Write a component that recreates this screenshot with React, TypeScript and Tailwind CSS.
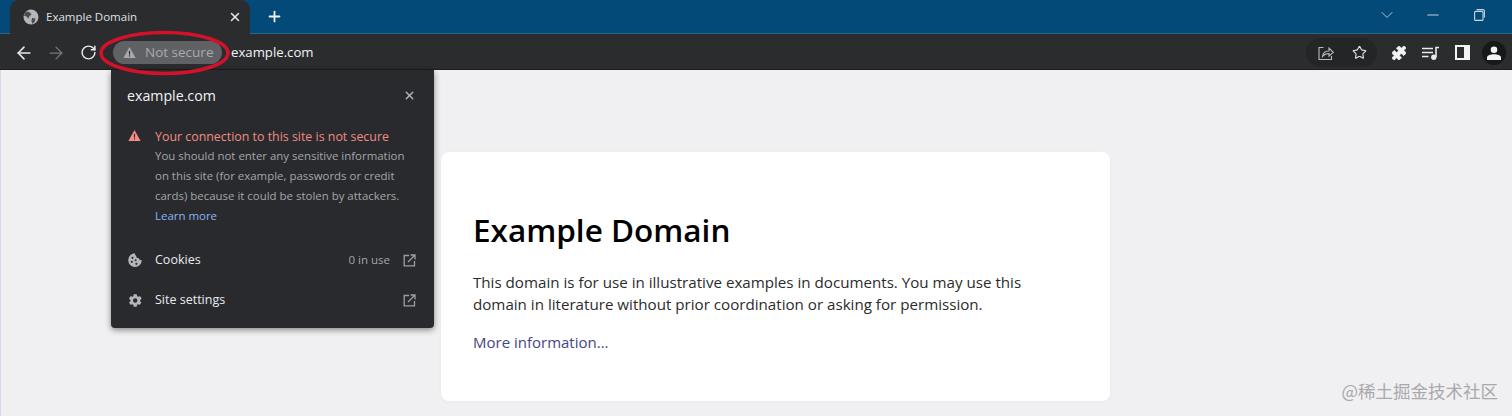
import { ArrowLeft, ArrowRight, RotateCw, X, Plus, ChevronDown, Minus, Star, Puzzle } from 'lucide-react';

const font = 'font-["Open_Sans","Noto_Sans_CJK_SC",sans-serif]';

function Globe() {
  return (
    <svg width="16" height="16" viewBox="0 0 16 16" className="shrink-0">
      <circle cx="8" cy="8" r="7.5" fill="#b4b6b9" />
      <path d="M4 2.5l3 1 1.5 2-2 1.5-1 2.5-2-2-2.5-1 1-3zM9 9l3.5.5-1 3.5-2 2-1-3z" fill="#4a4c50" />
    </svg>
  );
}

function Warning({ color, size }: { color: string; size: number }) {
  return (
    <svg width={size} height={size} viewBox="0 0 14 14" className="shrink-0">
      <path d="M7 1.2L13.6 12.8H.4z" fill={color} />
      <rect x="6.4" y="5.2" width="1.2" height="4" fill="#292a2d" />
      <rect x="6.4" y="10" width="1.2" height="1.3" fill="#292a2d" />
    </svg>
  );
}

function External() {
  return (
    <svg width="13" height="13" viewBox="0 0 13 13" fill="none" stroke="#9aa0a6" strokeWidth="1.3" className="shrink-0">
      <path d="M6 1.5H1.2v10.3h10.3V7" />
      <path d="M5 8L11.5 1.5M7.5 1h4.5v4.5" />
    </svg>
  );
}

function Cookie() {
  return (
    <svg width="14" height="14" viewBox="0 0 14 14" className="shrink-0">
      <path d="M7 .3a6.8 6.8 0 1 0 6.8 6.8c-1.6.3-2.6-.5-2.9-1.9C9.300 5.300 8 4.200 8.200 2.600 7.300 2.400 6.900 1.400 7 .3z" fill="#b4b6b9" />
      <circle cx="4.500" cy="4.800" r="1.100" fill="#292a2d" />
      <circle cx="3.800" cy="8.800" r="1.100" fill="#292a2d" />
      <circle cx="7.600" cy="7.300" r="1" fill="#292a2d" />
      <circle cx="8.400" cy="10.800" r="1.100" fill="#292a2d" />
    </svg>
  );
}

function Gear() {
  return (
    <svg width="15" height="15" viewBox="0 0 24 24" className="shrink-0">
      <path
        d="M19.4 13c.1-.3.1-.7.1-1s0-.7-.1-1l2.100-1.600c.2-.2.2-.4.100-.6l-2-3.500c-.1-.2-.4-.3-.6-.2l-2.500 1c-.5-.4-1.100-.7-1.700-1L14 2.400c0-.2-.2-.4-.5-.4h-4c-.2 0-.4.200-.5.400l-.4 2.700c-.6.200-1.200.6-1.700 1l-2.500-1c-.2-.1-.5 0-.6.200l-2 3.500c-.1.200-.1.500.1.600L4 11c0 .3-.1.700-.1 1s0 .7.100 1l-2.100 1.600c-.2.200-.2.400-.1.600l2 3.500c.1.200.4.300.6.200l2.500-1c.5.400 1.100.7 1.700 1l.4 2.700c0 .2.200.4.500.4h4c.2 0 .5-.2.500-.4l.4-2.700c.6-.2 1.200-.6 1.700-1l2.500 1c.2.100.5 0 .6-.2l2-3.500c.1-.2.100-.5-.1-.6zM11.500 15.500a3.500 3.500 0 1 1 0-7 3.500 3.500 0 0 1 0 7z"
        fill="#b4b6b9"
      />
    </svg>
  );
}

function Share() {
  return (
    <svg width="16" height="16" viewBox="0 0 16 16" fill="none" stroke="#b8bbbd" strokeWidth="1.100" className="shrink-0">
      <path d="M5.500 2.500H1v12h12.500V11" />
      <path d="M4.500 11.500c.5-4 3-5.500 6.500-5.500V3l4.300 4.300-4.300 3.700V8.500c-2.500 0-4.800.8-6.500 3z" />
    </svg>
  );
}

function MediaQueue() {
  return (
    <svg width="17" height="14" viewBox="0 0 17 14" fill="none" stroke="#e8eaed" strokeWidth="1.600" className="shrink-0">
      <path d="M0 2.500h11M0 6.500h11M0 10.500h6.500" />
      <path d="M14 11V1.500h3" />
      <circle cx="11.800" cy="11.300" r="1.900" fill="#e8eaed" />
    </svg>
  );
}

function SidePanel() {
  return (
    <svg width="15" height="15" viewBox="0 0 15 15" className="shrink-0">
      <rect x="0" y="0" width="15" height="15" fill="#f1f3f4" />
      <rect x="2" y="2" width="7" height="11" fill="#2b2c2e" />
    </svg>
  );
}

function Person() {
  return (
    <div className="flex h-[24px] w-[24px] items-center justify-center rounded-full bg-[#17181a]">
      <svg width="14" height="14" viewBox="0 0 14 14" fill="#f1f3f4">
        <circle cx="7" cy="3.800" r="3.300" />
        <path d="M0 14v-2.500C0 9.300 4 8.300 7 8.300s7 1 7 3.200V14z" />
      </svg>
    </div>
  );
}

function Restore() {
  return (
    <svg width="11" height="12" viewBox="0 0 11 12" fill="none" stroke="#c9d6e0" strokeWidth="1.100">
      <rect x=".6" y="2.400" width="8.400" height="9" rx="1" />
      <path d="M2.600 .6h6.300c.9 0 1.500.6 1.500 1.500v6.300" />
    </svg>
  );
}

export default function App() {
  return (
    <div className={`relative h-[416px] w-[1512px] overflow-hidden bg-[#f0f0f2] ${font}`}>
      {/* Tab strip */}
      <div className="flex h-[34px] items-end border-b border-[#2f6488] bg-[#034a78] pl-[10px]">
        <div className="-mb-px flex h-[34px] w-[240px] items-center rounded-t-[9px] bg-[#2b2c2e] pl-[13px] pr-[8px]">
          <Globe />
          <span className="ml-[7px] flex-1 text-[11.500px] text-[#dfe1e5]">Example Domain</span>
          <X size={14} strokeWidth={2.500} className="text-[#e8eaed]" />
        </div>
        <div className="ml-[16px] flex h-[34px] items-center">
          <Plus size={17} strokeWidth={2.500} className="text-[#f1f3f4]" />
        </div>
        <div className="ml-auto flex h-[30px] items-center self-start pr-[10px]">
          <div className="flex w-[46px] justify-center">
            <ChevronDown size={20} strokeWidth={1.200} className="text-[#a9c3d6]" />
          </div>
          <div className="flex w-[46px] justify-center">
            <Minus size={18} strokeWidth={1.300} className="text-[#c9d6e0]" />
          </div>
          <div className="flex w-[46px] justify-center">
            <Restore />
          </div>
        </div>
      </div>

      {/* Toolbar */}
      <div className="flex h-[36px] items-center bg-[#2b2c2e] pl-[14px] pr-[6px] pt-[1px] shadow-[inset_0_-1px_0_#1d1e20]">
        <ArrowLeft size={20} strokeWidth={1.900} className="text-[#e8eaed]" />
        <ArrowRight size={20} strokeWidth={1.500} className="ml-[12px] text-[#76797d]" />
        <RotateCw size={17} strokeWidth={2.100} className="ml-[14px] text-[#e8eaed]" />
        <div className="ml-[16px] flex h-[23px] w-[109px] items-center rounded-full bg-[#5f6165] pl-[10px]">
          <Warning color="#a6a8aa" size={13} />
          <span className="ml-[9px] text-[13.500px] text-[#a8aaad]">Not secure</span>
        </div>
        <span className="ml-[9px] text-[13.200px] font-medium text-[#f1f3f4]">example.com</span>
        <div className="ml-auto flex items-center">
          <div className="flex h-[29px] items-center gap-[18px] rounded-full bg-[#242527] pl-[12px] pr-[10px]">
            <Share />
            <Star size={15} strokeWidth={1.800} className="text-[#e3e3e3]" />
          </div>
          <Puzzle size={16} fill="#f1f3f4" strokeWidth={1} className="ml-[14px] text-[#f1f3f4]" />
          <div className="ml-[15px]">
            <MediaQueue />
          </div>
          <div className="ml-[16px]">
            <SidePanel />
          </div>
          <div className="ml-[12px]">
            <Person />
          </div>
        </div>
      </div>

      {/* Page body */}
      <main className="h-[346px] border-l border-[#d6d8ee] pl-[440px] pt-[82px]">
        <div className="h-[249px] w-[669px] rounded-[8px] bg-white px-[32px] pt-[59px] shadow-[0_1px_4px_rgba(0,0,0,0.03)]">
          <h1 className="text-[31.500px] font-semibold leading-[38px] text-black">Example Domain</h1>
          <p className="mt-[22px] text-[15.150px] leading-[22px] text-[#2b2b2b]">
            This domain is for use in illustrative examples in documents. You may use this
            <br />
            domain in literature without prior coordination or asking for permission.
          </p>
          <a className="mt-[16px] block text-[15px] leading-[22px] text-[#44467f]">More information...</a>
        </div>
      </main>

      {/* Site info popup */}
      <div className="absolute left-[111px] top-[70px] h-[258px] w-[323px] rounded-b-[4px] bg-[#292a2d] pl-[17px] pr-[18px] pt-[16px] shadow-[0_2px_6px_rgba(0,0,0,0.45)]">
        <div className="-ml-px flex h-[20px] items-center justify-between">
          <span className="text-[14.200px] text-[#f1f3f4]">example.com</span>
          <X size={13} strokeWidth={2.500} className="-mt-[2px] text-[#b4b6b9]" />
        </div>
        <div className="mt-[22px] flex">
          <div className="w-[27px] pt-[1px]">
            <Warning color="#f28b82" size={13} />
          </div>
          <div className="flex-1">
            <div className="text-[12.400px] leading-[17px] text-[#f28b82]">Your connection to this site is not secure</div>
            <p className="mt-[1px] whitespace-nowrap text-[11.450px] leading-[20px] text-[#a2a6aa]">
              You should not enter any sensitive information
              <br />
              on this site (for example, passwords or credit
              <br />
              cards) because it could be stolen by attackers.
              <br />
              <span className="text-[#8ab4f8]">Learn more</span>
            </p>
          </div>
        </div>
        <div className="mt-[24px] flex h-[20px] items-center">
          <div className="w-[27px]">
            <Cookie />
          </div>
          <span className="flex-1 text-[12.500px] text-[#e8eaed]">Cookies</span>
          <span className="mr-[13px] text-[11.500px] text-[#a2a6aa]">0 in use</span>
          <External />
        </div>
        <div className="mt-[20px] flex h-[20px] items-center">
          <div className="w-[27px]">
            <Gear />
          </div>
          <span className="flex-1 text-[12.500px] text-[#e8eaed]">Site settings</span>
          <External />
        </div>
      </div>

      {/* Red annotation ring */}
      <svg className="absolute left-[98px] top-[29px]" width="134" height="48" viewBox="0 0 134 48" fill="none">
        <ellipse cx="66.500" cy="24" rx="63.500" ry="20.500" stroke="#d3122a" strokeWidth="3.500" />
      </svg>

      {/* Watermark */}
      <div className='absolute bottom-[15px] right-[14px] font-["Noto_Sans_CJK_SC",sans-serif] text-[17.500px] leading-[20px] text-[#a9a9ab]'>
        @稀土掘金技术社区
      </div>
    </div>
  );
}
